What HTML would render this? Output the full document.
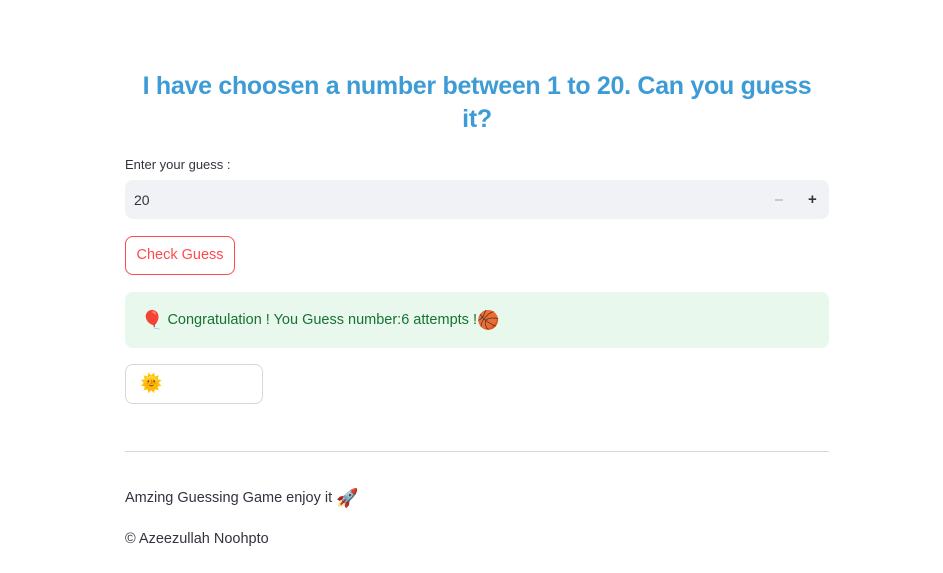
<!DOCTYPE html>
<html><head><meta charset="utf-8"><style>
body{margin:0;background:#fff;font-family:"Liberation Sans",sans-serif;color:#31333f;width:943px;height:573px;overflow:hidden;position:relative}
.t{position:absolute;left:125px;width:704px;top:70px;text-align:center;color:#3d9bd6;font-weight:bold;font-size:25px;line-height:33px;letter-spacing:-0.3px}
.lbl{position:absolute;left:125px;top:157px;font-size:13px}
.inp{position:absolute;left:125px;top:180px;width:704px;height:39px;background:#f0f2f6;border-radius:8px}
.inp span{position:absolute;left:9px;top:12px;font-size:14px}
.minus{position:absolute;left:775px;top:199px;width:8px;height:1.5px;background:#c8cad0}
.plus{position:absolute;left:808px;top:195px;font-size:15px;font-weight:bold;line-height:10px}
.btn{position:absolute;left:125px;top:236px;width:108px;height:37px;border:1px solid #ff4b4b;border-radius:8px;color:#ff4b4b;font-size:14.5px;text-align:center;line-height:37px}
.ok{position:absolute;left:125px;top:292px;width:704px;height:56px;background:#e8f8ec;border-radius:8px;color:#177233;font-size:14.5px;line-height:56px}
.ok > span{position:absolute;left:16px}
.e{font-size:18px;vertical-align:-2px}
.sb{position:absolute;left:125px;top:364px;width:136px;height:38px;border:1px solid #d5d7dc;border-radius:8px}
.sb span{position:absolute;left:14px;top:8px;font-size:18px}
hr{position:absolute;left:125px;top:451px;width:704px;margin:0;border:0;border-top:1px solid #d5d7dc}
.f1{position:absolute;left:125px;top:488px;font-size:14.5px}
.f2{position:absolute;left:125px;top:531px;font-size:14.5px}
</style></head><body>
<div class="t">I have choosen a number between 1 to 20. Can you guess it?</div>
<div class="lbl">Enter your guess :</div>
<div class="inp"><span>20</span></div>
<div class="minus"></div><div class="plus">+</div>
<div class="btn">Check Guess</div>
<div class="ok"><span><i class="e" style="font-style:normal">🎈</i> Congratulation ! You Guess number:6 attempts !<i class="e" style="font-style:normal">🏀</i></span></div>
<div class="sb"><span>🌞</span></div>
<hr>
<div class="f1">Amzing Guessing Game enjoy it <span class="e">🚀</span></div>
<div class="f2">© Azeezullah Noohpto</div>
</body></html>
